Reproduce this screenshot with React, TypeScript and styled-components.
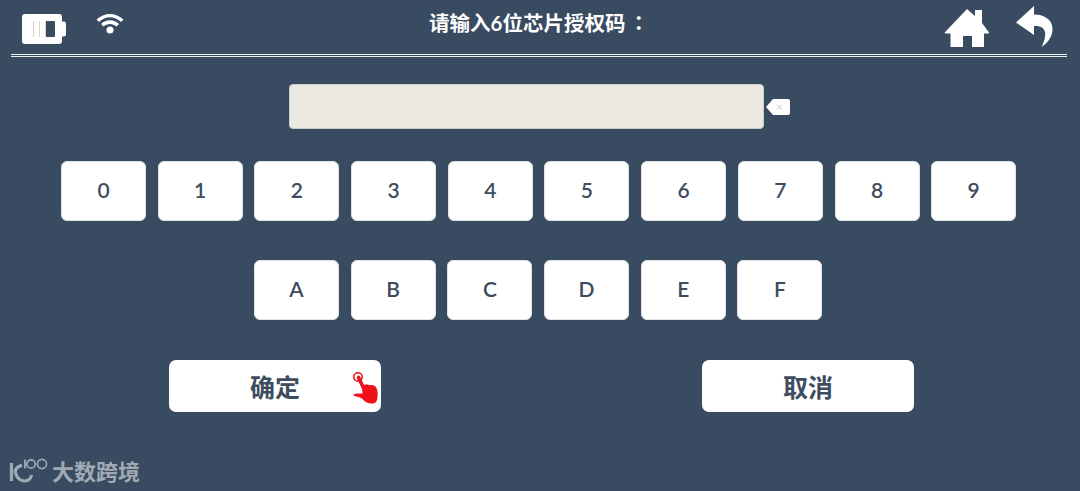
import { createGlobalStyle } from "styled-components";
import styled from "styled-components";

const GlobalStyle = createGlobalStyle`
  html, body {
    margin: 0;
    padding: 0;
    background: #384b60;
  }
`;

const Page = styled.div`
  width: 1080px;
  height: 491px;
  overflow: hidden;
  background: #384b60;
  font-family: Lato, "Noto Sans CJK SC", sans-serif;
  color: #3d4c5e;
`;

const Header = styled.header`
  height: 54px;
  margin: 0 13px 0 11px;
  border-bottom: 3px double #e9eef0;
  display: grid;
  grid-template-columns: 1fr auto 1fr;
  align-items: center;
`;

const StatusIcons = styled.div`
  display: flex;
  align-items: flex-start;
  gap: 29px;
  padding-left: 11px;
  margin-top: 3px;
`;

const Title = styled.h1`
  margin: -10px 0 0;
  font-size: 20.5px;
  line-height: 28px;
  font-weight: 700;
  color: #fff;
`;

const Colon = styled.span`
  margin-left: 3px;
  font-family: "Noto Sans CJK TC", sans-serif;
`;

const NavIcons = styled.div`
  display: flex;
  justify-content: flex-end;
  align-items: flex-end;
  gap: 26px;
  padding-right: 13px;
  margin-top: -2px;
`;

const InputRow = styled.div`
  display: flex;
  align-items: center;
  gap: 2px;
  margin: 27px 0 32px 289px;
`;

const CodeField = styled.div`
  width: 475px;
  height: 45px;
  box-sizing: border-box;
  background: #ebe9e2;
  border: 1px solid #c9cdce;
  border-radius: 4px;
`;

const KeyRow = styled.div<{ $indent: number; $after: number }>`
  display: flex;
  gap: 11.7px;
  padding-left: ${(p) => p.$indent}px;
  margin-bottom: ${(p) => p.$after}px;
`;

const Key = styled.button`
  width: 85px;
  height: 60px;
  padding: 0 0 3px;
  background: #fff;
  border: 1px solid #dfe3e6;
  border-radius: 6px;
  font-family: inherit;
  font-size: 21px;
  font-weight: 600;
  color: #3d4c5e;
`;

const ActionRow = styled.div`
  display: flex;
  gap: 321px;
  padding-left: 169px;
`;

const ActionButton = styled.button`
  position: relative;
  width: 212px;
  height: 52px;
  padding: 0;
  background: #fff;
  border: none;
  border-radius: 7px;
  font-family: inherit;
  font-size: 25px;
  font-weight: 700;
  color: #3d4c5e;
`;

const Pointer = styled.svg`
  position: absolute;
  right: 2px;
  top: 11px;
`;

const Brand = styled.div`
  display: flex;
  align-items: center;
  gap: 3px;
  margin: 45px 0 0 9px;
  font-family: "Noto Sans CJK SC", sans-serif;
  font-size: 22px;
  line-height: 26px;
  font-weight: 700;
  color: #a0aab5;
`;

const Battery = () => (
  <svg width="44" height="32" viewBox="0 0 44 32">
    <path
      fillRule="evenodd"
      fill="#fff"
      d="M3 1h34a3 3 0 0 1 3 3v4.500h2a2 2 0 0 1 2 2v11a2 2 0 0 1-2 2h-2V28a3 3 0 0 1-3 3H3a3 3 0 0 1-3-3V4a3 3 0 0 1 3-3zM7 8a1 1 0 0 0-1 1v14a1 1 0 0 0 1 1h25a1 1 0 0 0 1-1V9a1 1 0 0 0-1-1z"
    />
    <path fill="#fff" d="M6 8h18v16H6z" />
    <path fill="#d8d5cf" d="M11 8h1v16h-1zM17 8h1v16h-1zM23 8h1v16h-1z" />
  </svg>
);

const Wifi = () => (
  <svg width="30" height="22" viewBox="0 3 30 22" fill="none">
    <path d="M1.500 9.500C9 2 21 2 28.500 9.500l-2.500 2.500C19.500 5.500 10.500 5.500 4 12z" fill="#fff" />
    <path d="M6 14c5-5 13-5 18 0l-2.500 2.500c-3.500-3.500-9.500-3.500-13 0z" fill="#fff" />
    <circle cx="15" cy="20" r="3.500" fill="#fff" />
  </svg>
);

const Home = () => (
  <svg width="46" height="40" viewBox="0 0 46 40">
    <path
      fill="#fff"
      d="M23 1 L31 8V2h7v13l7 9.500a0.800 0.800 0 0 1-.6 1H40v13.500H28V28H19v11H6.500V25.500H1.500a0.800 0.800 0 0 1-.6-1.300z"
    />
  </svg>
);

const Back = () => (
  <svg width="38" height="44" viewBox="0 0 38 44">
    <path
      fill="#fff"
      d="M18 2 L0 18.500 18 31V22c6-.5 10 1.500 11 6 .8 4-.8 10-3.500 15C33 38 37 31 36.500 24 35.500 15 28 10.500 18 10.500z"
    />
  </svg>
);

const Backspace = () => (
  <svg width="24" height="18" viewBox="0 0 24 18">
    <path fill="#fff" d="M7 1h15a2 2 0 0 1 2 2v12a2 2 0 0 1-2 2H7L0 9z" />
    <path stroke="#c9c5bd" strokeWidth="1" d="M11 6.500l5 5M16 6.500l-5 5" />
  </svg>
);

const TapHand = () => (
  <Pointer width="26" height="33" viewBox="0 0 26 33">
    <circle cx="5" cy="6" r="4.200" fill="none" stroke="#f0101c" strokeWidth="1.600" />
    <path stroke="#f0101c" strokeWidth="3.600" strokeLinecap="round" d="M5.500 6.500 11 18" />
    <path
      fill="#f0101c"
      d="M9 15c3-1.500 6-1.800 8-.8 3-.5 5.500.5 6.500 2.800 1.500 3.500 1.500 8 .5 12-.5 2-2 3.300-4.500 3.500-4 .3-7-1-9-3.500-1.500-1.800-4-2.800-7-3.500-2-.5-3-1-3.500-1.800 2.500-1.200 6-1.500 9.500-1z"
    />
  </Pointer>
);

const BrandMark = () => (
  <svg width="40" height="26" viewBox="0 0 40 26" fill="none" stroke="#a0aab5">
    <path strokeWidth="3.200" d="M2.500 6v18" />
    <path strokeWidth="3.200" d="M13 8C8 10 5.500 13 6.500 16c1.500 5 5 8 9.500 8 3.500 0 6-2.500 6.500-6" />
    <path strokeWidth="1.800" d="M16 2.500v9" />
    <circle cx="22" cy="7" r="4.200" strokeWidth="1.700" />
    <circle cx="33" cy="7" r="4.600" strokeWidth="1.700" />
  </svg>
);

const DIGITS = ["0", "1", "2", "3", "4", "5", "6", "7", "8", "9"];
const LETTERS = ["A", "B", "C", "D", "E", "F"];

export default function App() {
  return (
    <Page>
      <GlobalStyle />
      <Header>
        <StatusIcons>
          <Battery />
          <Wifi />
        </StatusIcons>
        <Title>
          请输入6位芯片授权码<Colon>：</Colon>
        </Title>
        <NavIcons>
          <Home />
          <Back />
        </NavIcons>
      </Header>
      <InputRow>
        <CodeField />
        <Backspace />
      </InputRow>
      <KeyRow $indent={61} $after={39}>
        {DIGITS.map((d) => (
          <Key key={d}>{d}</Key>
        ))}
      </KeyRow>
      <KeyRow $indent={254} $after={40}>
        {LETTERS.map((l) => (
          <Key key={l}>{l}</Key>
        ))}
      </KeyRow>
      <ActionRow>
        <ActionButton>
          确定
          <TapHand />
        </ActionButton>
        <ActionButton>取消</ActionButton>
      </ActionRow>
      <Brand>
        <BrandMark />
        大数跨境
      </Brand>
    </Page>
  );
}
